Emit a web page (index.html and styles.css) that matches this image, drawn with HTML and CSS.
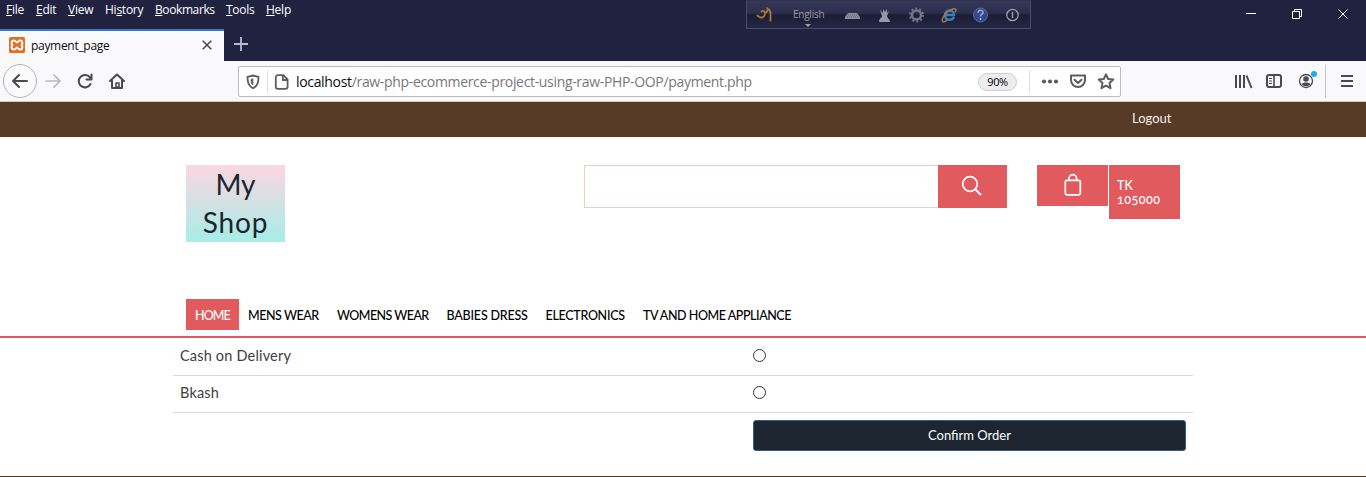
FILE: index.html
```html
<!DOCTYPE html>
<html lang="en">
<head>
<meta charset="utf-8">
<title>payment_page</title>
<link rel="stylesheet" href="styles.css">
</head>
<body>
<header class="titlebar">
  <div class="menurow">
    <nav class="menus">
      <span class="m-file"><u>F</u>ile</span><span class="m-edit"><u>E</u>dit</span><span class="m-view"><u>V</u>iew</span><span class="m-history">Hi<u>s</u>tory</span><span class="m-bookmarks"><u>B</u>ookmarks</span><span class="m-tools"><u>T</u>ools</span><span class="m-help"><u>H</u>elp</span>
    </nav>
    <div class="langbar">
      <svg width="285" height="29" viewBox="0 0 285 29" fill="none">
        <path d="M15 12c2-2 4-1 4 1.500 0 3-2.500 4.500-4.500 3.800s-3-1.300-3.500-2.300M19 13c1.500-.2 3-2.200 2.500-4.500 2 1 3 2.500 3 5v8" stroke="#a8782f" stroke-width="1.800"/>
        <path d="M59 24h6l-3 3z" fill="#9c9eaa"/>
        <path d="M99 19v-2l3-4h9l3 4v2z" fill="#8b8e9c"/><path d="M102 15h10M101 17h12" stroke="#5b5d70" stroke-dasharray="1 1"/>
        <path d="M133 22c0-4 3-4 3-6l-2-6 3 3v-4l2 3 2-3v4l2-2-2 5c0 2 3 3 3 6z" fill="#9698a3"/>
        <circle cx="170.500" cy="15" r="4.500" stroke="#70778d" stroke-width="2.500"/><circle cx="170.500" cy="15" r="6.500" stroke="#70778d" stroke-width="2" stroke-dasharray="2 2.080"/>
        <path d="M199 15h9c0-6-9-6-9 0s7 6 9 2" stroke="#397db8" stroke-width="2.500"/><path d="M197 22c-3-2 3-11 10-13 3-1 4 1 2 3M197 22c1 0 3-1 4-2" stroke="#a8793b" stroke-width="1.400"/>
        <circle cx="234.500" cy="15" r="7" fill="#34488d" stroke="#5965a1"/><path d="M232 13c0-4 6-3 5 0-1 1-2.500 2-2.500 3.500m0 1.500v2" stroke="#a1abd0" stroke-width="1.500"/>
        <circle cx="266.500" cy="15" r="5.700" stroke="#9c9eac" stroke-width="1.300"/><path d="M266.500 12v6" stroke="#9c9eac" stroke-width="1.500"/>
      </svg>
      <span class="lang">English</span>
    </div>
    <svg class="winctl" width="110" height="29" viewBox="0 0 110 29" fill="none" stroke="#fff">
      <path d="M0 13.500h10M46.500 11.500h7v7h-7zM48.500 11.500v-2h7v7h-2M92.500 9.500l9 9m0-9l-9 9"/>
    </svg>
  </div>
  <div class="tabs">
    <div class="tab">
      <svg width="16" height="16" viewBox="0 0 16 16"><rect width="16" height="16" rx="1.500" fill="#e46f24"/><path d="M5 3.500c2 0 2 2 3 2s1-2 3-2c3 0 3 4 1 4.500 2 .5 2 4.500-1 4.500-2 0-2-2-3-2s-1 2-3 2c-3 0-3-4-1-4.500-2-.5-2-4.500 1-4.500z" fill="none" stroke="#fff" stroke-width="1.900"/></svg>
      <span class="tabname">payment_page</span>
      <svg width="10" height="10" viewBox="0 0 10 10" stroke="#4a4a4f" stroke-width="1.600"><path d="M.7.700l8.600 8.600m0-8.600L.7 9.300"/></svg>
    </div>
    <svg class="plus" width="14" height="14" viewBox="0 0 14 14" stroke="#b9bacb" stroke-width="1.800"><path d="M7 0v14M0 7h14"/></svg>
  </div>
</header>
<div class="toolbar">
  <svg class="navicons" width="140" height="40" viewBox="0 0 140 40" fill="none" stroke="#4a4a4f" stroke-width="2" stroke-linecap="round" stroke-linejoin="round">
    <circle cx="20" cy="20" r="16.500" fill="#fbfbfc" stroke="#b5b5b8" stroke-width="1"/>
    <path d="M27 20H13m6-6l-6 6 6 6"/>
    <path d="M46 20h14m-6-6l6 6-6 6" stroke="#b8b8bc" stroke-width="1.700"/>
    <path d="M90 16.500A6.200 6.200 0 1 0 90.500 23M91.500 13.500v5h-5"/>
    <path d="M110 20l7-6.500 7 6.500M112 19.500V27h10v-7.500"/><path d="M116 26v-4h3v4z" stroke-width="1.600"/>
  </svg>
  <div class="urlbar">
    <svg width="54" height="28" viewBox="0 0 54 28" fill="none" stroke="#5c5c61" stroke-width="1.800" stroke-linejoin="round">
      <path d="M14 7.500l5.500 1.300c0 5.500-.8 8.700-5.500 11.400-4.700-2.700-5.500-5.900-5.500-11.400z"/><path d="M13.900 10.800v6.200c-1.300-1-1.900-2.500-1.900-5.500z" fill="#5c5c61" stroke-width=".8"/>
      <path d="M28.500 3v22" stroke="#dedee2" stroke-width="1"/>
      <path d="M39.500 7.200h5.500l4.300 4.300v7.300a2 2 0 0 1-2 2h-7.800a2 2 0 0 1-2-2V9.200a2 2 0 0 1 2-2zM44.500 7.500V12h4.500" transform="translate(-.7)"/>
    </svg>
    <span class="url"><b>localhost</b>/raw-php-ecommerce-project-using-raw-PHP-OOP/payment.php</span>
    <span class="zoom">90%</span>
    <svg class="urlicons" width="94" height="28" viewBox="0 0 94 28" fill="none" stroke="#5c5c61" stroke-width="2" stroke-linejoin="round" stroke-linecap="round">
      <path d="M2.500 3v22" stroke="#dedee2" stroke-width="1"/>
      <g fill="#5c5c61" stroke="none"><circle cx="17" cy="13.500" r="2.100"/><circle cx="23" cy="13.500" r="2.100"/><circle cx="29" cy="13.500" r="2.100"/></g>
      <path d="M44 7.500h14v4.500a7 7 0 0 1-14 0zM47.500 11.700l3.500 3.300 3.500-3.300"/>
      <path d="M79 7l2.200 4.700 5.100.6-3.800 3.500 1 5.100L79 18.400l-4.500 2.500 1-5.100-3.800-3.500 5.100-.6z" transform="translate(0 -.7)"/>
    </svg>
  </div>
  <svg class="toolicons" width="132" height="40" viewBox="0 0 132 40" fill="none" stroke="#4a4a4f" stroke-width="2">
    <path d="M2 14v13M6 14v13M10 14v13M12.500 14.500l5 12.500"/>
    <rect x="33" y="14" width="14" height="12" rx="2"/><path d="M40 14v12" stroke-width="1.600"/><path d="M35 17.500h3M35 20h3M35 22.500h3" stroke-width="1"/>
    <circle cx="72" cy="20" r="6.500" stroke-width="1.300"/><circle cx="72" cy="18" r="2.800" fill="#4a4a4f" stroke="none"/><path d="M67.500 23c2-2 7-2 9 0-2 3-7 3-9 0z" fill="#4a4a4f" stroke="none"/>
    <circle cx="80" cy="13" r="3" fill="#16adf5" stroke="none"/>
    <path d="M91.500 4v33" stroke="#c4c4c9" stroke-width="1"/>
    <path d="M107 15h12M107 20h12M107 25h12"/>
  </svg>
</div>
<div class="topbar"><span>Logout</span></div>
<main>
  <div class="shophead">
    <div class="logo"><span class="my">My</span><span class="shop">Shop</span></div>
    <div class="search">
      <div class="field"></div>
      <div class="go"><svg width="22" height="22" viewBox="0 0 22 22" fill="none" stroke="#fff" stroke-width="1.700"><circle cx="9" cy="9" r="7.300"/><path d="M14.200 14.200l5.800 5.800" stroke-width="2"/></svg></div>
    </div>
    <div class="bag"><svg width="18" height="24" viewBox="0 0 18 24" fill="none" stroke="#fff" stroke-width="1.700"><rect x="1.300" y="7.300" width="15" height="14.500" rx="1.500"/><path d="M5 7.500V5.500a3.800 3.800 0 0 1 7.600 0v2"/></svg></div>
    <div class="total"><span>TK</span><span class="sum">105000</span></div>
  </div>
  <nav class="shopnav">
    <span class="n1">HOME</span><span class="n2">MENS WEAR</span><span class="n3">WOMENS WEAR</span><span class="n4">BABIES DRESS</span><span class="n5">ELECTRONICS</span><span class="n6">TV AND HOME APPLIANCE</span>
  </nav>
  <div class="payment">
    <div class="option"><span class="cash">Cash on Delivery</span><i class="radio"></i></div>
    <div class="option second"><span class="bkash">Bkash</span><i class="radio"></i></div>
    <button class="confirm">Confirm Order</button>
  </div>
</main>
<footer class="foot"></footer>
</body>
</html>
```

FILE: styles.css
```css
* { box-sizing: border-box; }
body { margin: 0; height: 477px; overflow: hidden; background: #fff; font-family: Lato, sans-serif; display: flex; flex-direction: column; }
svg { display: block; flex: none; }
span { white-space: nowrap; }
.titlebar { height: 61px; background: #20223f; font-family: "Open Sans", "Noto Sans", sans-serif; }
.menurow { height: 29px; display: flex; }
.menus { display: flex; width: 746px; padding: 1px 0 0 6px; color: #fff; font-size: 12px; line-height: 18px; letter-spacing: -.25px; }
.menus u { text-underline-offset: 1px; }
.m-file { width: 30px; }
.m-edit { width: 32px; }
.m-view { width: 37px; }
.m-history { width: 50px; }
.m-bookmarks { width: 71px; letter-spacing: -.4px; }
.m-tools { width: 40px; }
.langbar { position: relative; width: 285px; height: 29px; border: 1px solid #4a4c69; border-top-color: #303350; background: linear-gradient(#343755 0, #2b2e4c 45%, #1b1d35 52%, #252844 100%); }
.langbar svg { margin: -1px; }
.lang { position: absolute; left: 46px; top: 6px; font-size: 10px; line-height: 14px; color: #9899a8; letter-spacing: -.25px; }
.winctl { margin-left: 215px; }
.tabs { height: 32px; display: flex; }
.tab { width: 224px; border-top: 2px solid #2f7bd3; background: #f9f9fb; display: flex; align-items: center; padding: 0 12px 2px 9px; }
.tabname { flex: 1; padding-left: 6px; font-size: 12px; color: #0c0c0d; letter-spacing: -.3px; }
.plus { margin: 8px 0 0 10px; }
.toolbar { height: 41px; background: #f9f9fb; border-bottom: 1px solid #d3cbc7; display: flex; }
.urlbar { width: 883px; height: 31px; margin: 5px 0 0 98px; border: 1px solid #bcbcbf; border-radius: 2px; background: #fff; display: flex; align-items: center; }
.url { width: 685px; padding-left: 3px; font: 14px "Open Sans", sans-serif; letter-spacing: -.33px; color: #77777b; }
.url b { font-weight: 400; color: #0c0c0d; }
.zoom { width: 39px; height: 18px; border: 1px solid #cfcfd2; border-radius: 9px; background: #ededf0; font: 11px/16px "Open Sans", sans-serif; text-align: center; letter-spacing: -.4px; }
.urlicons { margin-left: 10px; margin-right: -2px; }
.toolicons { margin-left: 113px; }
.topbar { height: 35px; background: #573b26; color: #f5efeb; padding: 0 194.500px; text-align: right; font-size: 13px; line-height: 33px; }
main { height: 339px; }
.shophead { height: 162px; padding: 28px 186px 0; display: flex; align-items: flex-start; }
.logo { width: 99px; height: 77px; background: linear-gradient(#fcd6e2, #a7ede6); color: #1b2530; font-size: 28px; line-height: 38px; display: flex; flex-direction: column; align-items: center; }
.shop { letter-spacing: .8px; }
.search { width: 423px; height: 43px; margin-left: 299px; display: flex; }
.field { width: 354px; border: 1px solid #eecdc7; border-right: 0; }
.go { width: 69px; background: #e15b5e; padding: 10px 0 0 23px; }
.bag { width: 71px; height: 41px; margin-left: 30px; background: #e15b5e; padding: 8px 0 0 27px; }
.total { width: 71px; height: 54px; margin-left: 1px; padding: 14px 0 0 8px; background: #e15b5e; color: #fff; font-size: 12.500px; line-height: 14px; font-weight: 500; display: flex; flex-direction: column; }
.sum { font-feature-settings: "onum"; letter-spacing: .5px; }
.shopnav { height: 39px; border-bottom: 2px solid #dc5a60; padding: 0 186px 6px; display: flex; color: #000; font-size: 12.500px; line-height: 33px; font-weight: 500; letter-spacing: -.45px; }
.shopnav span { padding-left: 9px; }
.n1 { width: 53px; background: #e15b5e; color: #fff; letter-spacing: -.9px; }
.n2 { width: 89px; }
.n3 { width: 109.500px; letter-spacing: -.55px; }
.n4 { width: 99px; letter-spacing: -.2px; }
.n5 { width: 97.500px; letter-spacing: -.3px; }
.payment { width: 1020px; margin: 0 auto; }
.option { height: 37px; border-bottom: 1px solid #d9d9d9; display: flex; padding: 0 7px; color: #3e3e3e; font-size: 14.500px; line-height: 35px; letter-spacing: .18px; }
.option:first-child { height: 38px; }
.option span { width: 573px; }
.radio { width: 13px; height: 13px; margin-top: 11px; border: 1px solid #333; border-radius: 50%; }
.second { line-height: 34px; }
.second .radio { margin-top: 10px; }
.confirm { display: block; width: 433px; height: 31px; margin: 7px 0 0 580px; padding: 0 0 2px; border: 1px solid #2e6186; border-radius: 3px; background: #1d2530; color: #fff; font: 13px/26px Lato, sans-serif; }
.foot { height: 1px; background: #573b26; }
```
